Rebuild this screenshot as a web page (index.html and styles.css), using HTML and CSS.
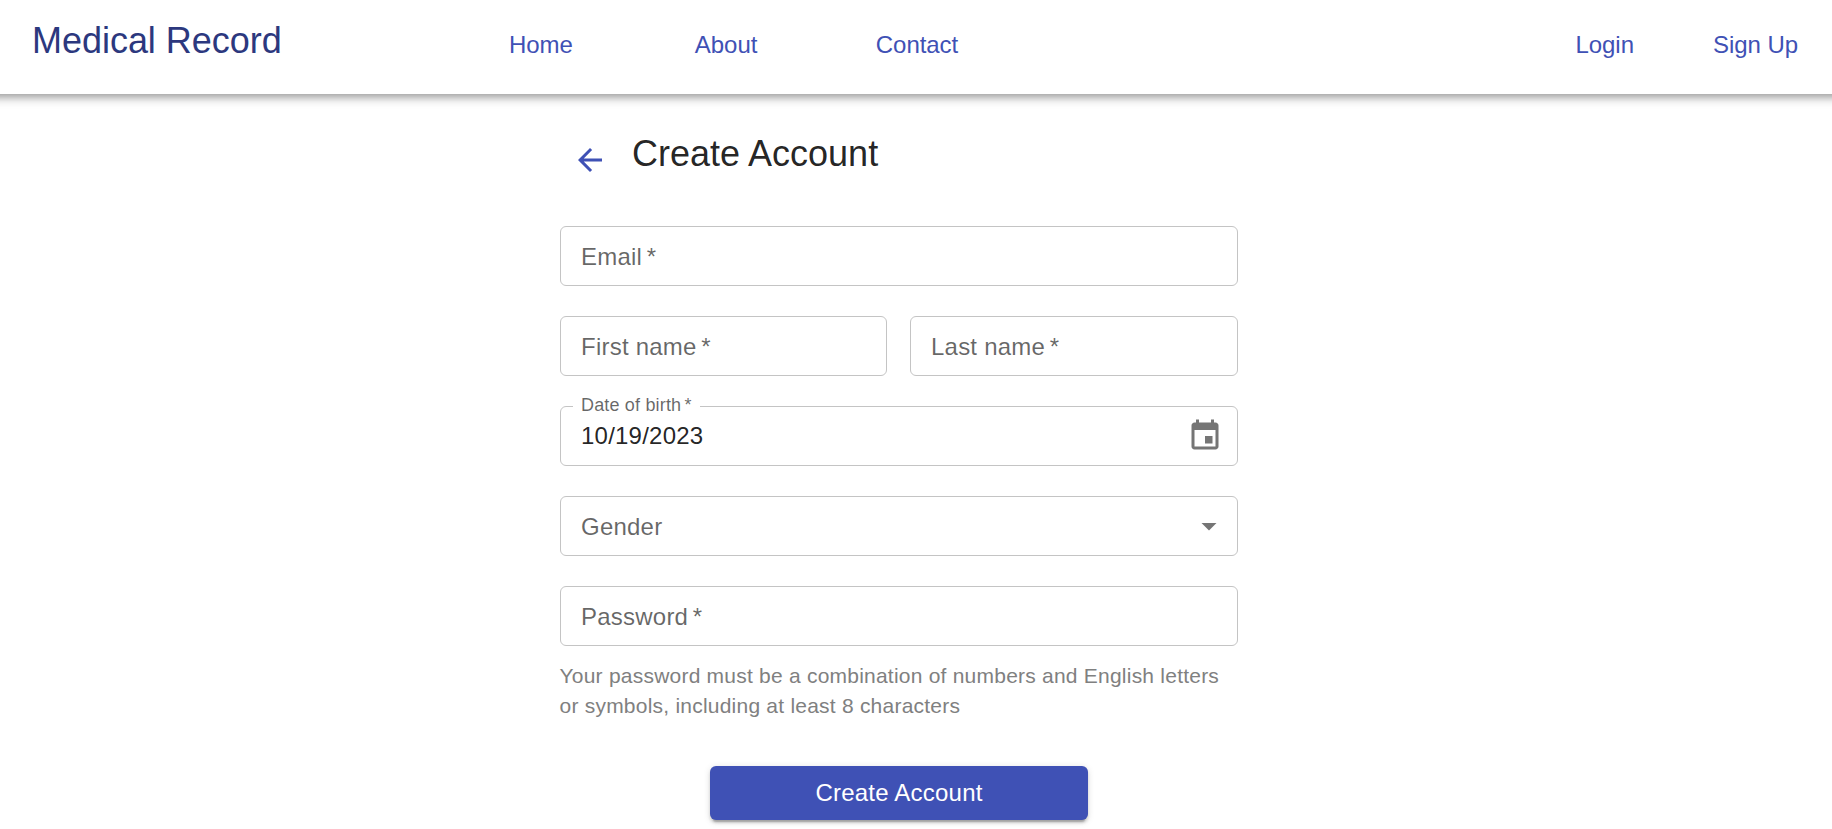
FILE: index.html
```html
<!DOCTYPE html>
<html lang="en">
<head>
<meta charset="utf-8">
<title>Medical Record</title>
<link rel="stylesheet" href="styles.css">
</head>
<body>
<header class="bar">
  <a class="brand">Medical Record</a>
  <nav class="links">
    <a>Home</a>
    <a>About</a>
    <a class="contact">Contact</a>
  </nav>
  <nav class="account">
    <a>Login</a>
    <a>Sign Up</a>
  </nav>
</header>
<main class="page">
  <div class="heading">
    <svg class="icon back" viewBox="0 0 24 24"><path d="M20 11H7.83l5.59-5.59L12 4l-8 8 8 8 1.41-1.41L7.83 13H20v-2z"/></svg>
    <h1 class="title">Create Account</h1>
  </div>
  <form class="form">
    <div class="field"><label class="label">Email&thinsp;<span class="star">*</span></label></div>
    <div class="row">
      <div class="field"><label class="label">First name&thinsp;<span class="star">*</span></label></div>
      <div class="field"><label class="label">Last name&thinsp;<span class="star">*</span></label></div>
    </div>
    <div class="field date">
      <label class="notch">Date of birth&thinsp;<span class="star">*</span></label>
      <span class="value">10/19/2023</span>
      <svg class="icon" viewBox="0 0 24 24"><path d="M17 12h-5v5h5v-5zM16 1v2H8V1H6v2H5c-1.11 0-1.99.9-1.99 2L3 19c0 1.1.89 2 2 2h14c1.1 0 2-.9 2-2V5c0-1.1-.9-2-2-2h-1V1h-2zm3 18H5V8h14v11z"/></svg>
    </div>
    <div class="field select">
      <label class="label">Gender</label>
      <svg class="icon" viewBox="0 0 24 24"><path d="M7 10l5 5 5-5z"/></svg>
    </div>
    <div class="field"><label class="label">Password&thinsp;<span class="star">*</span></label></div>
  </form>
  <p class="hint">Your password must be a combination of numbers and English letters or symbols, including at least 8 characters</p>
  <button class="submit" type="button">Create Account</button>
</main>
</body>
</html>
```

FILE: styles.css
```css
* {
  box-sizing: border-box;
}

body {
  margin: 0;
  height: 829px;
  overflow: hidden;
  background: #fff;
  color: rgba(0, 0, 0, 0.87);
  font-family: "Liberation Sans", Arial, sans-serif;
  font-size: 24px;
  letter-spacing: 0.225px;
}

.bar {
  display: flex;
  align-items: flex-start;
  height: 94px;
  margin: 0 -20px;
  padding: 0 54px 0 52px;
  color: #3f51b5;
  background: #fff;
  letter-spacing: 0;
  box-shadow:
    0 3px 6px -1.5px rgba(0, 0, 0, 0.2),
    0 6px 7.5px 0 rgba(0, 0, 0, 0.14),
    0 1.5px 15px 0 rgba(0, 0, 0, 0.12);
}

.brand {
  width: 477px;
  padding-top: 18px;
  color: #2c387e;
  font-size: 36px;
  line-height: 46px;
  letter-spacing: -0.03px;
}

.links,
.account {
  display: flex;
  padding-top: 27px;
  line-height: 36px;
}

.links {
  gap: 122px;
  letter-spacing: -0.05px;
}

.contact {
  margin-left: -3.5px;
}

.account {
  gap: 79px;
  margin-left: auto;
  letter-spacing: -0.05px;
}

.page {
  display: flex;
  flex-direction: column;
  width: 678px;
  margin-left: 560px;
}

.heading {
  display: flex;
  height: 132px;
  padding: 36px 0 0 12px;
  gap: 24px;
}

.title {
  margin: 0;
  font-size: 36px;
  font-weight: 400;
  line-height: 48px;
  letter-spacing: 0;
}

.icon {
  flex: none;
  width: 36px;
  height: 36px;
  fill: #757575;
}

.back {
  margin-top: 12px;
  fill: #3f51b5;
}

.form {
  display: flex;
  flex-direction: column;
  gap: 30px;
}

.row {
  display: grid;
  grid-template-columns: 327px 328px;
  gap: 23px;
}

.field {
  position: relative;
  display: flex;
  align-items: center;
  justify-content: space-between;
  height: 60px;
  padding: 1px 14px 0 20px;
  border: 1px solid #c4c4c4;
  border-radius: 6px;
  line-height: 36px;
}

.label {
  color: rgba(0, 0, 0, 0.6);
}

.star {
  margin-left: -0.5px;
}

.notch {
  position: absolute;
  top: -15px;
  left: 12px;
  width: 127px;
  padding-left: 8px;
  background: #fff;
  color: rgba(0, 0, 0, 0.6);
  font-size: 18px;
  line-height: 27px;
  letter-spacing: 0.17px;
}

.select {
  padding-right: 10px;
}

.select .icon {
  margin-bottom: 1px;
}

.date {
  padding-top: 0;
}

.date .value {
  margin-bottom: 1px;
}

.hint {
  margin: 15px 0 0 -0.5px;
  color: #808080;
  font-size: 21px;
  line-height: 30px;
}

.submit {
  width: 378px;
  height: 54px;
  margin: 45px auto 0;
  padding: 0;
  border: 0;
  border-radius: 6px;
  background: #3f51b5;
  color: #fff;
  font: inherit;
  letter-spacing: 0.225px;
  box-shadow:
    0 4.5px 1.5px -3px rgba(0, 0, 0, 0.2),
    0 3px 3px 0 rgba(0, 0, 0, 0.14),
    0 1.5px 7.5px 0 rgba(0, 0, 0, 0.12);
}
```
